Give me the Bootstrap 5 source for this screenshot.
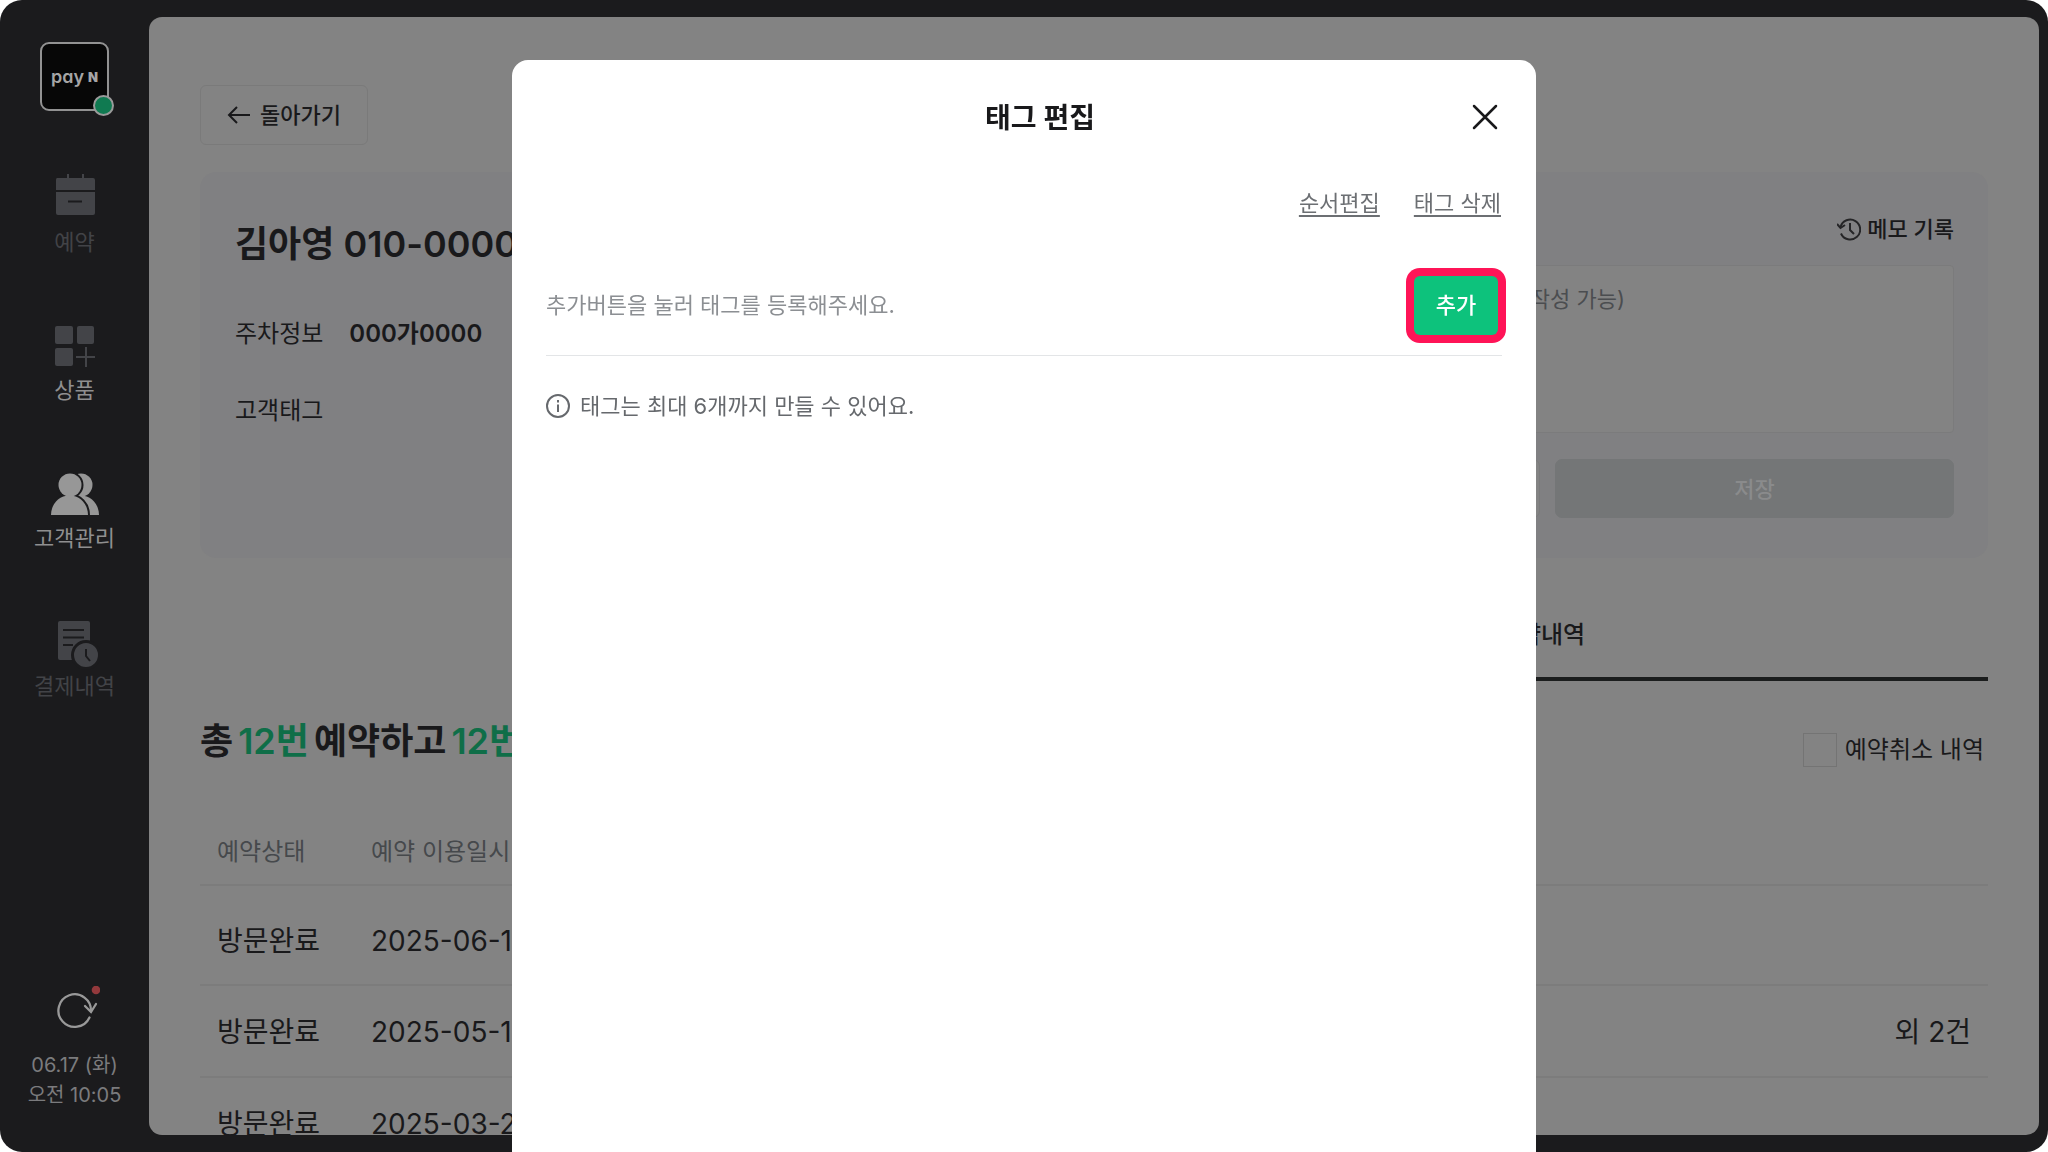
<!DOCTYPE html>
<html lang="ko">
<head>
<meta charset="utf-8">
<meta name="viewport" content="width=device-width, initial-scale=1">
<title>태그 편집</title>
<link href="https://cdn.jsdelivr.net/npm/bootstrap@5.3.0/dist/css/bootstrap.min.css" rel="stylesheet">
<style>
  body { font-family: Inter, "Noto Sans CJK KR", sans-serif; font-size: 22px; line-height: 30px; color: #19191b; background: #fff; }
  button, input, textarea { font-family: inherit; }
  .app-frame { background: #1b1b1d; border-radius: 22px; overflow: hidden; }

  /* Sidebar */
  .side { width: 149px; padding: 42px 0 42px; }
  .shop-logo { width: 69px; height: 69px; border: 2px solid #929292; border-radius: 9px; background: #070707; color: #a5a5a5; font-size: 18px; line-height: 20px; font-weight: 600; font-feature-settings: "cv11"; margin-bottom: 56px; }
  .shop-logo b { font-size: 13px; font-weight: 900; }
  .shop-status { position: absolute; right: -7px; bottom: -7px; width: 21px; height: 21px; border-radius: 50%; background: #107a51; border: 2px solid #9a9a9a; }
  .side-link { height: 148px; color: #424347; text-decoration: none; }
  .side-link svg { width: 50px; height: 60px; }
  .side-link.lit { color: #8f8f90; }
  .side-clock { color: #7b7b7d; font-size: 20px; }
  .sync-btn { width: 50px; height: 46px; margin-bottom: 18px; }

  /* Main panel */
  .panel { margin: 17px 9px 17px 0; padding: 68px 51px 0; background: #838383; border-radius: 13px; overflow: hidden; }
  .back-btn { height: 60px; padding: 0 26px; border: 1px solid #7a7a7a; border-radius: 6px; background: none; color: #19191b; font-weight: 500; gap: 10px; }
  .customer { margin-top: 27px; padding: 34px 34px 34px 35px; min-height: 386px; background: #808082; border-radius: 16px; }
  .customer-name { font-size: 36px; line-height: 54px; font-weight: 600; margin: 11px 0 46px; }
  .fact { font-size: 24px; line-height: 34px; gap: 26px; margin-bottom: 43px; }
  .fact strong { font-weight: 600; }
  .memo-col { width: 813px; }
  .memo-log { color: #19191b; text-decoration: none; font-weight: 500; gap: 6px; margin: 8px 0 21px; }
  .memo-box { height: 168px; padding: 18px; border: 1px solid #7b7b7c; border-radius: 4px; background: #838383; font-size: 22px; line-height: 30px; resize: none; }
  .memo-box::placeholder { color: #4b4d50; }
  .memo-btns { gap: 15px; margin-top: 26px; }
  .memo-btns button { height: 59px; border-radius: 7px; border: 1px solid #7b7b7c; background: #838383; color: #19191b; font-weight: 500; }
  .memo-btns button:disabled { border-color: #747677; background: #747677; color: #8a8b8c; }

  .history-tabs { margin-top: 32px; }
  .history-tabs button { height: 91px; padding-top: 3px; border: 0; border-bottom: 4px solid transparent; background: none; color: #505356; font-size: 24px; font-weight: 500; }
  .history-tabs button.active { color: #19191b; border-color: #1b1d1d; }
  .summary { margin-top: 33px; }
  .summary h2 { font-size: 36px; line-height: 54px; font-weight: 600; gap: 5px; }
  .summary h2 em { font-style: normal; color: #0f6e48; }
  .cancel-check { font-size: 24px; line-height: 36px; gap: 8px; padding: 0 4px 0 0; }
  .cancel-check input { appearance: none; width: 34px; height: 34px; margin: 0; border: 1px solid #747474; background: #838383; }

  .bookings { margin-top: 48px; --bs-table-bg: transparent; --bs-table-color: #19191b; border-color: #797979; }
  .bookings > :not(caption) > * > * { padding: 2px 17px 0; border-bottom: 2px solid #7c7c7c; vertical-align: middle; }
  .bookings thead th { height: 69px; padding-top: 4px; font-size: 24px; font-weight: 400; color: #46494c; }
  .bookings td { height: 92px; font-size: 28px; }
  .bookings tbody tr:first-child td { height: 100px; padding-top: 11px; }

  /* Tag editor */
  .tag-dialog { width: 50%; max-width: none; margin: 60px auto 0; height: calc(100vh - 60px); }
  .tag-sheet { height: 100%; border: 0; border-radius: 16px 16px 0 0; padding: 34px; color: #19191b; }
  .tag-title { font-size: 28px; line-height: 48px; font-weight: 600; padding-left: 32px; }
  .sheet-close { position: absolute; right: 36px; top: 42px; width: 30px; height: 30px; padding: 0; border: 0; background: none; }
  .tag-links { gap: 34px; margin-top: 46px; padding-right: 1px; }
  .tag-links a { color: #6c6f73; text-decoration: underline 2px; text-underline-offset: 4px; }
  .tag-row { margin-top: 58px; padding: 0 4px 20px 0; border-bottom: 1px solid #e3e5e7; color: #8c8f93; }
  .tag-row span { padding-bottom: 2px; }
  .add-btn { width: 84px; height: 59px; border: 0; border-radius: 6px; background: #0dc27c; color: #fff; font-weight: 500; padding: 0 0 2px; box-shadow: 0 0 0 8px #ff1457; }
  .tag-note { margin-top: 35px; color: #66696d; gap: 10px; }
</style>
</head>
<body class="vh-100 overflow-hidden">
<div class="app-frame d-flex vh-100">
  <nav class="side d-flex flex-column align-items-center flex-shrink-0">
    <div class="shop-logo position-relative d-flex align-items-center justify-content-center gap-1 flex-shrink-0"><span>pay</span><b>N</b><span class="shop-status"></span></div>

    <a href="#" class="side-link d-flex flex-column align-items-center">
      <svg viewBox="0 0 50 60" fill="#434448"><path d="M17 7h2v5h-2zM32 7h2v5h-2z"/><path d="M7 11h36a2 2 0 0 1 2 2v10H6V13a2 2 0 0 1 1-2z"/><path d="M6 25h39v21a2 2 0 0 1-2 2H8a2 2 0 0 1-2-2z"/><path d="M18 34.500h14" stroke="#1b1b1d" stroke-width="2"/></svg>
      <span>예약</span>
    </a>
    <a href="#" class="side-link lit d-flex flex-column align-items-center">
      <svg viewBox="0 0 50 60" fill="#434448"><rect x="5" y="11" width="18" height="18" rx="2"/><rect x="27" y="11" width="17" height="18" rx="2"/><rect x="5" y="33" width="18" height="18" rx="2"/><path d="M36 32v20M26 42h19" stroke="#434448" stroke-width="2"/></svg>
      <span>상품</span>
    </a>
    <a href="#" class="side-link lit d-flex flex-column align-items-center">
      <svg viewBox="0 0 50 60" fill="#979797"><circle cx="31" cy="22" r="11.500"/><path d="M12 52c0-11 8-19.500 18.500-19.500S49 41 49 52z"/><g stroke="#1b1b1d" stroke-width="4"><circle cx="20" cy="22" r="11.500"/><path d="M1 52c0-11 8-19.500 18.500-19.500S38 41 38 52z"/></g><circle cx="20" cy="22" r="11.500"/><path d="M1 52c0-11 8-19.500 18.500-19.500S38 41 38 52z"/></svg>
      <span>고객관리</span>
    </a>
    <a href="#" class="side-link d-flex flex-column align-items-center">
      <svg viewBox="0 0 50 60" fill="#434448"><rect x="8" y="10" width="32" height="39" rx="2"/><path d="M13 19h21M13 26.500h21M13 34h10" stroke="#1b1b1d" stroke-width="2"/><circle cx="36" cy="44" r="13.500" stroke="#1b1b1d" stroke-width="3"/><path d="M36 38v7l4 5" fill="none" stroke="#1b1b1d" stroke-width="2"/></svg>
      <span>결제내역</span>
    </a>

    <div class="side-clock mt-auto d-flex flex-column align-items-center text-center">
      <button type="button" class="sync-btn btn p-0 border-0" aria-label="새로고침">
        <svg class="d-block" width="50" height="46" viewBox="0 0 50 46" fill="none" stroke="#999" stroke-width="2.300" stroke-linecap="round"><path d="M39.500 31.500A16.300 16.300 0 1 1 41 25.500"/><path d="M35 20l6 6 5-8"/><circle cx="46" cy="4" r="4.300" fill="#93393c" stroke="none"/></svg>
      </button>
      <span>06.17 (화)</span>
      <span>오전 10:05</span>
    </div>
  </nav>

  <main class="panel flex-grow-1">
    <button type="button" class="back-btn d-inline-flex align-items-center">
      <svg width="23" height="18" viewBox="0 0 23 18" fill="none" stroke="#19191b" stroke-width="2"><path d="M23 9H2M10 1L2 9l8 8"/></svg>
      돌아가기
    </button>

    <section class="customer d-flex justify-content-between">
      <div>
        <h1 class="customer-name">김아영 010-0000-0000</h1>
        <div class="fact d-flex"><span>주차정보</span><strong>000가0000</strong></div>
        <div class="fact d-flex"><span>고객태그</span></div>
      </div>
      <div class="memo-col d-flex flex-column">
        <a href="#" class="memo-log d-flex align-items-center align-self-end">
          <svg width="24" height="24" viewBox="0 0 24 24" fill="none" stroke="#252527" stroke-width="2"><path d="M3.500 10A10 10 0 1 1 4 16.500"/><path d="M0 7l3.500 4L8 8M13 6v7l4 4"/></svg>
          메모 기록
        </a>
        <textarea class="memo-box form-control" aria-label="고객 메모" placeholder="고객 메모를 남기세요. (최대 500자까지 작성 가능)"></textarea>
        <div class="memo-btns d-flex">
          <button type="button" class="flex-fill w-50">취소</button>
          <button type="button" class="flex-fill w-50" disabled>저장</button>
        </div>
      </div>
    </section>

    <div class="history-tabs d-flex">
      <button type="button" class="w-50">고객정보</button>
      <button type="button" class="w-50 active">예약내역</button>
    </div>

    <div class="summary d-flex justify-content-between align-items-end">
      <h2 class="m-0 d-flex"><span>총</span><em>12번</em><span>예약하고</span><em>12번</em><span>방문했어요.</span></h2>
      <label class="cancel-check d-flex align-items-center"><input type="checkbox">예약취소 내역</label>
    </div>

    <table class="bookings table mb-0">
      <colgroup><col style="width:154px"><col style="width:400px"><col></colgroup>
      <thead><tr><th>예약상태</th><th>예약 이용일시</th><th></th></tr></thead>
      <tbody>
        <tr><td>방문완료</td><td>2025-06-17</td><td class="text-end"></td></tr>
        <tr><td>방문완료</td><td>2025-05-12</td><td class="text-end">외 2건</td></tr>
        <tr><td>방문완료</td><td>2025-03-24</td><td class="text-end"></td></tr>
      </tbody>
    </table>
  </main>
</div>

<div class="modal d-block overflow-hidden" role="dialog" aria-labelledby="tagTitle">
  <div class="modal-dialog tag-dialog">
    <div class="modal-content tag-sheet">
      <h2 class="tag-title text-center m-0" id="tagTitle">태그 편집</h2>
      <button type="button" class="sheet-close" aria-label="닫기">
        <svg class="d-block" width="30" height="30" viewBox="0 0 30 30" fill="none" stroke="#19191b" stroke-width="2.500" stroke-linecap="round"><path d="M4 4l22 22M26 4L4 26"/></svg>
      </button>
      <div class="tag-links d-flex justify-content-end">
        <a href="#">순서편집</a>
        <a href="#">태그 삭제</a>
      </div>
      <div class="tag-row d-flex justify-content-between align-items-center">
        <span>추가버튼을 눌러 태그를 등록해주세요.</span>
        <button type="button" class="add-btn">추가</button>
      </div>
      <div class="tag-note d-flex align-items-center">
        <svg width="24" height="24" viewBox="0 0 24 24" fill="none" stroke="#66696d" stroke-width="2"><circle cx="12" cy="12" r="11"/><path d="M12 10.500V18M12 6v2.500"/></svg>
        <span>태그는 최대 6개까지 만들 수 있어요.</span>
      </div>
    </div>
  </div>
</div>
<script src="https://cdn.jsdelivr.net/npm/bootstrap@5.3.0/dist/js/bootstrap.bundle.min.js"></script>
</body>
</html>
